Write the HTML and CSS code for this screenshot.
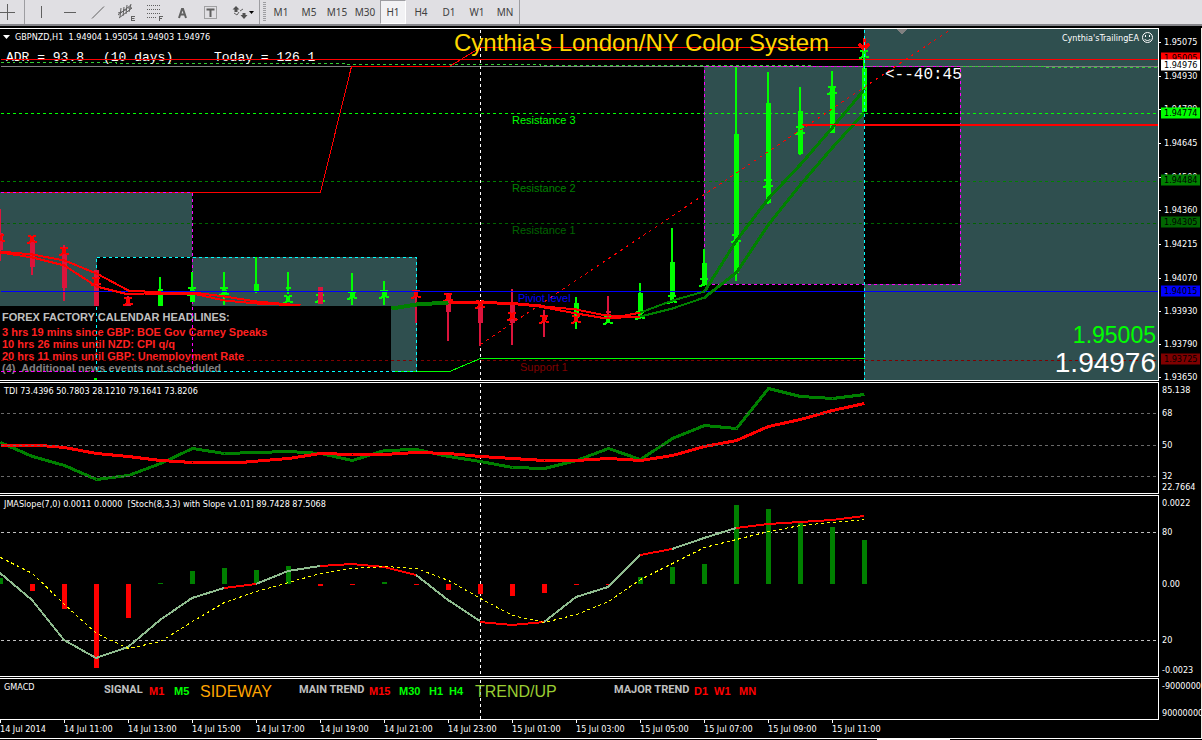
FILE: index.html
```html
<!DOCTYPE html>
<html lang="en">
<head>
<meta charset="utf-8">
<title>GBPNZD,H1</title>
<link rel="stylesheet" href="styles.css">
</head>
<body>
<div class="terminal">
  <div class="toolbar">
    <div class="tools">
      <button class="tool tool-first" aria-label="Crosshair"><svg width="16" height="24"><path d="M7.500 4V20M0 12.500H15"/></svg></button>
      <button class="tool" aria-label="Vertical line"><svg width="24" height="24"><path d="M11.500 6V18"/></svg></button>
      <button class="tool" aria-label="Horizontal line"><svg width="24" height="24"><path d="M6 12.500H18"/></svg></button>
      <button class="tool" aria-label="Trend line"><svg width="24" height="24"><path d="M6 18.500L18 6.500"/></svg></button>
      <button class="tool" aria-label="Equidistant channel"><svg width="24" height="24"><path d="M4 15L17 5M5 18L18 8M7 8L6 17M10 7L9 16M13 5L12 14M17 4L15 12M4 13L8 12M9 10L12 10M14 8L18 8M17 16.500H21M17 18.500H20.500M17 20.500H21M17.500 16V21"/></svg></button>
      <button class="tool" aria-label="Fibonacci retracement"><svg width="24" height="24"><path stroke-dasharray="1 1" d="M5 5.500H19M5 9.500H19M5 13.500H19M5 17.500H15"/><path d="M17.500 16V21M17 16.500H21M17 18.500H20"/></svg></button>
      <button class="tool" aria-label="Text"><svg width="24" height="24"><path stroke-width="2" d="M9 18L12 9H13L16 18M10 14.500H15"/></svg></button>
      <button class="tool" aria-label="Text label"><svg width="24" height="24"><path stroke-dasharray="1 1" d="M6.500 6.500H18.500V18.500H6.500Z"/><path stroke-width="2" d="M8.500 9.500H16.500M12.500 9V17"/></svg></button>
      <button class="tool tool-wide" aria-label="Arrows"><svg width="32" height="24"><path class="solid" d="M10 6L13.500 9.500H11.500V12H8.500V9.500H6.500ZM18 19L14.500 15H16.500V13H19.500V15H21.500Z"/><path d="M8 13L11 15L13 12M14 11L17 9"/><path class="black" d="M23 11H28L25.500 14Z"/></svg></button>
    </div>
    <div class="grip"></div>
    <div class="frames">
      <button class="frame">M1</button><button class="frame">M5</button><button class="frame">M15</button><button class="frame">M30</button><button class="frame active" aria-pressed="true">H1</button><button class="frame">H4</button><button class="frame">D1</button><button class="frame">W1</button><button class="frame">MN</button>
    </div>
  </div>

  <main class="charts">
    <section class="panel price">
      <div class="plot">
        <svg class="drawing" viewBox="0 29 1158 351" preserveAspectRatio="none">
          <defs>
            <path id="mark" d="M-4 -3H-2L0 -1L2 -3H4M-5 4H-3L-1 2V0H1V2L3 3H5"/>
          </defs>
          <g class="zone">
            <path d="M0 192H192V257H97V306H0ZM192 257H417V371H391V306H192ZM704 66H864V284H704ZM864 29H1158V380H864V284H960V66H864Z"/>
          </g>
          <path class="grey-fill" d="M896 29H907L901.500 34.500Z"/>
          <g transform="translate(.5 .5)">
            <path class="grey" d="M0 66H1158"/>
            <path class="lime dash" d="M0 113H1158"/>
            <path class="green dash" d="M0 181H1158"/>
            <path class="dark-green dash" d="M0 223H1158"/>
            <path class="maroon dash" d="M0 360H1158"/>
            <path class="white dash" d="M480 29V380"/>
            <path class="leaf dash" d="M0 62H116V63H345V64H540V65H811V66H1043V67H1158"/>
            <path class="red" d="M0 59H1158M0 192H320L351 66H449L480 47H864"/>
            <path class="lime" d="M391 371H449L480 358H864"/>
            <path class="magenta dash" d="M0 192H192V371H0M704 66H960V284H704Z"/>
            <path class="cyan dash" d="M96 257H416V371H96ZM864 29V380"/>
          </g>
          <path class="red w2" d="M801 125H1158"/>
          <path class="crimson w2" d="M0 209V261M32 236V275M64 245V301M128 296V305M416 290V323M448 293V341M480 302V346M512 289V345M544 310V337M608 296V323"/>
          <path class="lime w2" d="M160 277V305M192 272V302M224 272V305M256 257V293M288 272V294M352 273V305M384 281V305M576 297V329M640 283V319M672 228V303M704 249V286M736 67V281M768 72V204M800 87V155M832 71V133M864 50V68"/>
          <g transform="translate(.5 0)">
            <path class="crimson w5" d="M0 233V250M32 240V267M64 253V288M96 270V306M128 303V306M320 287V304M448 295V312M480 304V323M512 304V323M544 316V320M608 311V313"/>
            <path class="lime w5" d="M160 289V306M192 290V302M224 290V295M256 284V292M288 287V289M352 291V297M384 291V297M576 303V318M640 293V314M672 262V297M704 263V284M736 134V273M768 103V203M800 111V154M832 86V133M864 68V112"/>
          </g>
          <g class="red w2">
            <use href="#mark" x="0" y="238"/><use href="#mark" x="32" y="239"/><use href="#mark" x="64" y="251"/><use href="#mark" x="96" y="281"/><use href="#mark" x="128" y="301"/><use href="#mark" x="416" y="294"/><use href="#mark" x="448" y="297"/><use href="#mark" x="480" y="304"/><use href="#mark" x="512" y="316"/><use href="#mark" x="544" y="319"/><use href="#mark" x="576" y="319"/>
          </g>
          <g class="lime w2">
            <use href="#mark" x="192" y="291"/><use href="#mark" x="224" y="291"/><use href="#mark" x="288" y="299"/><use href="#mark" x="320" y="298"/><use href="#mark" x="352" y="295"/><use href="#mark" x="384" y="294"/><use href="#mark" x="608" y="320"/><use href="#mark" x="640" y="315"/><use href="#mark" x="672" y="299"/><use href="#mark" x="704" y="282"/><use href="#mark" x="736" y="238"/><use href="#mark" x="768" y="183"/><use href="#mark" x="800" y="130"/><use href="#mark" x="832" y="90"/><use href="#mark" x="864" y="54"/>
          </g>
          <path class="crimson w5" d="M320.500 288V304"/>
          <path class="red w3" d="M859 44L864 49L869 44M864 38V49"/>
          <g transform="translate(.5 .5)">
            <path class="blue" d="M0 291H1158"/>
            <path class="red dashdot" d="M480 344L950 29"/>
            <path class="red w2" d="M0 251L32 254L64 260L96 273L128 290L160 292H192L224 296L256 301L300 305M0 252L32 257L64 265L96 286L128 294L144 293H192L224 300L256 303L300 305"/>
            <path class="green w4" d="M391 308L416 304L448 302"/>
            <path class="red w3" d="M448 302H480L512 303L544 306"/>
            <path class="red w2" d="M544 306L576 309L600 314L620 316L640 312M544 307L576 313L600 317H620L640 316"/>
            <path class="green w2" d="M640 312L672 300L704 291M640 316L672 308L704 297"/>
            <path class="green w3" d="M704 291L736 240L768 198L800 164L832 127L864 89M704 297L736 272L768 224L800 184L832 147L864 112"/>
            <path class="cyan dash" d="M864 29V380"/>
            <path class="red" d="M801 124H864"/>
          </g>
          <path class="lime w3" d="M94 379H97"/>
        </svg>
        <div class="label caption" style="--x:3;--y:8"><svg class="caret" width="8" height="4"><path d="M0 0H7L3.500 4Z"/></svg>GBPNZD,H1&nbsp; 1.94904 1.95054 1.94903 1.94976</div>
        <div class="label mono" style="--x:6;--y:29">ADR = 93.8</div>
        <div class="label mono" style="--x:103;--y:29">(10 days)</div>
        <div class="label mono" style="--x:214;--y:29">Today = 126.1</div>
        <h1 class="label title" style="--x:454;--y:14">Cynthia's London/NY Color System</h1>
        <div class="label level lime-text" style="--x:512;--y:91">Resistance 3</div>
        <div class="label level green-text" style="--x:512;--y:159">Resistance 2</div>
        <div class="label level dark-green-text" style="--x:512;--y:201">Resistance 1</div>
        <div class="label level blue-text" style="--x:518;--y:269">Piviot level</div>
        <div class="label level maroon-text" style="--x:520;--y:338">Support 1</div>
        <div class="label countdown" style="--x:885;--y:46">&lt;--40:45</div>
        <div class="advisor">Cynthia'sTrailingEA <svg width="13" height="13"><circle cx="6.500" cy="6.500" r="5"/><path d="M4.500 4V6M8.500 4V6M3.500 8C5 10 8 10 9.500 8"/></svg></div>
        <div class="news">
          <div class="news-head">FOREX FACTORY CALENDAR HEADLINES:</div>
          <div>3 hrs 19 mins since GBP: BOE Gov Carney Speaks</div>
          <div>10 hrs 26 mins until NZD: CPI q/q</div>
          <div>20 hrs 11 mins until GBP: Unemployment Rate</div>
          <div class="news-more">(4)&nbsp; Additional news events not scheduled</div>
        </div>
        <svg class="drawing" viewBox="0 29 1158 351" preserveAspectRatio="none">
          <g transform="translate(.5 .5)">
            <path class="red" d="M0 59H330"/>
            <path class="maroon dash" d="M0 360H391"/>
            <path class="cyan dash" d="M96 306V371H391"/>
            <path class="magenta dash" d="M192 306V371M0 371H96"/>
          </g>
        </svg>
        <div class="quotes">
          <div class="ask">1.95005</div>
          <div class="bid">1.94976</div>
        </div>
      </div>
      <div class="axis">
        <span class="tick" style="--y:14">1.95075</span>
        <span class="tick" style="--y:48">1.94930</span>
        <span class="tick" style="--y:81">1.94789</span>
        <span class="tick" style="--y:115">1.94645</span>
        <span class="tick" style="--y:149">1.94500</span>
        <span class="tick" style="--y:182">1.94360</span>
        <span class="tick" style="--y:216">1.94215</span>
        <span class="tick" style="--y:250">1.94070</span>
        <span class="tick" style="--y:283">1.93930</span>
        <span class="tick" style="--y:316">1.93790</span>
        <span class="tick" style="--y:349">1.93650</span>
        <span class="tag tag-red" style="--y:30">1.95005</span>
        <span class="tag tag-white" style="--y:37">1.94976</span>
        <span class="tag tag-lime" style="--y:85">1.94774</span>
        <span class="tag tag-green" style="--y:152">1.94484</span>
        <span class="tag tag-dark" style="--y:194">1.94305</span>
        <span class="tag tag-blue" style="--y:263">1.94015</span>
        <span class="tag tag-maroon" style="--y:331">1.93725</span>
      </div>
    </section>

    <section class="panel tdi">
      <div class="plot">
        <svg class="drawing" viewBox="0 383 1158 110" preserveAspectRatio="none">
          <g transform="translate(.5 .5)">
            <path class="white dash" d="M480 383V493"/>
            <path class="green w3" d="M0 442L32 456L64 465L96 479L128 475L160 463L192 448L224 453L256 452L288 451L320 453L352 460L384 450L416 449L448 456L480 461L512 467L544 468L576 460L608 448L640 459L672 438L704 425L736 428L768 388L800 396L832 398L864 394"/>
            <path class="red w3" d="M0 445H40L64 447L96 453L128 456L160 460L192 462H240L288 458L320 453L352 454H384L416 452L448 453L480 456L544 460H576L608 458L640 460L672 455L704 446L736 440L768 426L800 419L832 410L864 403"/>
            <path class="dim dash" d="M0 413H1158M0 445H1158M0 476H1158"/>
          </g>
        </svg>
        <div class="label caption" style="--x:4;--y:8">TDI 73.4396 50.7803 28.1210 79.1641 73.8206</div>
      </div>
      <div class="axis">
        <span class="mark" style="--y:8">85.138</span>
        <span class="mark" style="--y:31">68</span>
        <span class="mark" style="--y:63">50</span>
        <span class="mark" style="--y:94">32</span>
        <span class="mark" style="--y:105">22.7664</span>
      </div>
    </section>

    <section class="panel slope">
      <div class="plot">
        <svg class="drawing" viewBox="0 496 1158 180" preserveAspectRatio="none">
          <g transform="translate(.5 .5)">
            <path class="white dash" d="M480 496V676"/>
            <path class="silver dash" d="M0 532H1158M0 640H1158"/>
          </g>
          <g transform="translate(.5 0)">
            <path class="green w5" d="M0 578V584M160 583V584M192 571V584M224 568V584M256 570V584M288 566V584M384 582V584M640 577V584M672 567V584M704 564V584M736 505V584M768 509V584M800 522V584M832 527V584M864 540V584"/>
            <path class="red w5" d="M32 584V591M64 584V609M96 584V668M128 584V618M320 584V586M352 584V585M416 584V585M448 584V590M480 584V594M512 584V596M544 584V593M576 584V585M608 584V585"/>
          </g>
          <path class="sage w2" d="M0 573L32 600L64 640L96 658L128 647L160 620L192 598L224 588M256 584L288 571L320 566M416 575L448 600L480 621M544 622L576 597L608 587L640 555M672 549L704 538L736 528"/>
          <path class="red w2" d="M224 588L256 584M320 566L352 564L384 567L416 575M480 622L512 625L544 622M640 555L672 549M736 528L768 524L800 522L832 520L864 516"/>
          <path class="yellow fine" transform="translate(.5 .5)" d="M0 557L32 573L64 604L96 633L128 648L160 641L192 621L224 602L256 591L288 582L320 573L352 568L384 566L416 568L448 580L480 598L512 615L544 622L576 614L608 601L640 579L672 563L704 547L736 539L768 531L800 525L832 522L864 519"/>
        </svg>
        <div class="label caption" style="--x:4;--y:8">JMASlope(7,0) 0.0011 0.0000&nbsp; [Stoch(8,3,3) with Slope v1.01] 89.7428 87.5068</div>
      </div>
      <div class="axis">
        <span class="mark" style="--y:8">0.0022</span>
        <span class="mark" style="--y:37">80</span>
        <span class="mark" style="--y:89">0.00</span>
        <span class="mark" style="--y:145">20</span>
        <span class="mark" style="--y:175">-0.0023</span>
      </div>
    </section>

    <section class="panel gmacd">
      <div class="plot">
        <svg class="drawing" viewBox="0 679 1158 40" preserveAspectRatio="none">
          <path class="white dash" transform="translate(.5 .5)" d="M480 679V719"/>
        </svg>
        <div class="label caption" style="--x:4;--y:8">GMACD</div>
        <div class="label signal silver-text" style="--x:104;--y:11">SIGNAL</div>
        <div class="label signal red-text" style="--x:149;--y:12">M1</div>
        <div class="label signal lime-text" style="--x:174;--y:12">M5</div>
        <div class="label verdict orange-text" style="--x:200;--y:13">SIDEWAY</div>
        <div class="label signal silver-text" style="--x:299;--y:11">MAIN TREND</div>
        <div class="label signal red-text" style="--x:369;--y:12">M15</div>
        <div class="label signal lime-text" style="--x:399;--y:12">M30</div>
        <div class="label signal lime-text" style="--x:429;--y:12">H1</div>
        <div class="label signal lime-text" style="--x:449;--y:12">H4</div>
        <div class="label verdict olive-text" style="--x:475;--y:13">TREND/UP</div>
        <div class="label signal silver-text" style="--x:614;--y:11">MAJOR TREND</div>
        <div class="label signal red-text" style="--x:694;--y:12">D1</div>
        <div class="label signal red-text" style="--x:714;--y:12">W1</div>
        <div class="label signal red-text" style="--x:739;--y:12">MN</div>
      </div>
      <div class="axis">
        <span class="mark" style="--y:8">-90000000</span>
        <span class="mark" style="--y:35">90000000</span>
      </div>
    </section>
  </main>

  <div class="times">
    <span>14 Jul 2014</span><span>14 Jul 11:00</span><span>14 Jul 13:00</span><span>14 Jul 15:00</span><span>14 Jul 17:00</span><span>14 Jul 19:00</span><span>14 Jul 21:00</span><span>14 Jul 23:00</span><span>15 Jul 01:00</span><span>15 Jul 03:00</span><span>15 Jul 05:00</span><span>15 Jul 07:00</span><span>15 Jul 09:00</span><span>15 Jul 11:00</span>
  </div>
  <div class="foot"></div>
</div>
</body>
</html>
```
FILE: styles.css
```css
* { box-sizing: border-box; }

body {
  margin: 0;
  background: #000;
  color: #fff;
  font: 9px/12px "DejaVu Sans Condensed", "DejaVu Sans", sans-serif;
}

.terminal {
  display: flex;
  flex-direction: column;
  height: 100vh;
  overflow: hidden;
}

/* Toolbar */
.toolbar {
  display: flex;
  flex: none;
  height: 26px;
  background: #e0dfe3;
  border-bottom: 2px solid #85858a;
}
.tools { display: flex; border-right: 1px solid #9d9da1; }
.tool, .frame {
  display: flex;
  align-items: center;
  justify-content: center;
  width: 28px;
  height: 24px;
  padding: 0;
  border: 0;
  background: none;
  color: #404040;
}
.tool-first {
  width: 25px;
  justify-content: flex-start;
  border-right: 1px solid #9d9da1;
  margin-right: 3px;
}
.tool-wide { width: 35px; }
.tool svg { fill: none; stroke: #606060; }
.tool .solid { fill: #505050; stroke: none; }
.tool .black { fill: #000; stroke: none; }
.grip {
  width: 3px;
  margin: 2px 1px 2px 3px;
  background: repeating-linear-gradient(#9d9da1 0 1px, #e0dfe3 1px 2px);
}
.frames { display: flex; border-right: 1px solid #9d9da1; }
.frame { font: 10px/14px "Noto Sans", sans-serif; }
.frame.active {
  width: 26px;
  margin: 0 1px;
  background: #f2f2f4;
  border: 1px solid #fff;
  border-top-color: #9d9da1;
  border-left-color: #9d9da1;
}

/* Panels */
.charts {
  display: flex;
  flex: 1;
  flex-direction: column;
  gap: 1px;
  min-height: 0;
  margin-top: 2px;
  border-right: 1px solid #f0f0e8;
}
.panel { display: flex; min-height: 0; }
.price { flex: 353 1 0; }
.tdi { flex: 112 1 0; }
.slope { flex: 182 1 0; }
.gmacd { flex: 42 1 0; }
.plot {
  position: relative;
  flex: 1;
  border: solid #fff;
  border-width: 1px 1px 1px 0;
  overflow: hidden;
}
.axis {
  position: relative;
  flex: none;
  width: 42px;
  overflow: hidden;
}
.drawing {
  position: absolute;
  inset: 0;
  width: 100%;
  height: 100%;
  fill: none;
  shape-rendering: crispEdges;
}

/* Strokes */
.w2 { stroke-width: 2; }
.w3 { stroke-width: 3; }
.w4 { stroke-width: 4; }
.w5 { stroke-width: 5; }
.dash { stroke-dasharray: 3 3; }
.fine { stroke-dasharray: 3 3; }
.dashdot { stroke-dasharray: 3 4; }
.zone { fill: #2f4f4f; }
.grey-fill { fill: #808080; }
.grey { stroke: #808080; }
.dim { stroke: #696969; }
.silver { stroke: #c0c0c0; }
.white { stroke: #fff; }
.red { stroke: #f00; }
.crimson { stroke: #dc143c; }
.lime { stroke: #0f0; }
.leaf { stroke: #32cd32; }
.green { stroke: #008000; }
.dark-green { stroke: #006400; }
.maroon { stroke: #800000; }
.magenta { stroke: #f0f; }
.cyan { stroke: #0ff; }
.blue { stroke: #00f; }
.sage { stroke: #8fbc8f; }
.yellow { stroke: #ff0; }

/* Text over the plots: --x and --y give the left edge and the vertical centre */
.label {
  position: absolute;
  left: calc(var(--x) / 1158 * 100%);
  top: calc(var(--y) * 1px);
  margin: 0;
  transform: translateY(-50%);
  white-space: pre;
}
.caption { display: flex; align-items: center; }
.caret { margin-right: 4px; fill: #fff; }
.mono { font: 13px/16px "Liberation Mono", monospace; }
.title { color: #ffd700; font: 24px/28px "Liberation Sans", sans-serif; }
.level { font: 11px/14px "Liberation Sans", sans-serif; }
.countdown { font: 16px/18px "Liberation Mono", monospace; }
.signal { font: bold 11px/14px "Liberation Sans", sans-serif; }
.signal.silver-text { font-family: Roboto, sans-serif; }
.verdict { font: 16px/18px "Liberation Sans", sans-serif; }

.lime-text { color: #0f0; }
.green-text { color: #008000; }
.dark-green-text { color: #006400; }
.blue-text { color: #00f; }
.maroon-text { color: #800000; }
.silver-text { color: #c0c0c0; }
.red-text { color: #f00; }
.orange-text { color: #ffa500; }
.olive-text { color: #9acd32; }

.advisor {
  position: absolute;
  top: 2px;
  right: 4px;
  display: flex;
  align-items: center;
  gap: 2px;
}
.advisor svg { fill: none; stroke: #fff; }

.news {
  position: absolute;
  left: 0;
  bottom: 5px;
  width: 391px;
  height: 69px;
  padding: 5px 2px 0;
  background: #000;
  color: #ff2020;
  font: bold 11px/12px "Liberation Sans", sans-serif;
}
.news-head { margin-bottom: 3px; color: #c0c0c0; }
.news-more { color: #808080; }

.quotes {
  position: absolute;
  right: 2px;
  bottom: 2px;
  text-align: right;
  font-family: "Liberation Sans", sans-serif;
}
.ask { color: #0f0; font-size: 23px; line-height: 26px; }
.bid { font-size: 28px; line-height: 30px; }

/* Scales */
.tick, .mark, .tag {
  position: absolute;
  top: calc(var(--y) / var(--span, 353) * 100%);
  left: 0;
  padding-left: 3px;
  transform: translateY(-50%);
  white-space: nowrap;
}
.tdi .axis { --span: 112; }
.slope .axis { --span: 182; }
.gmacd .axis { --span: 42; }
.tick { display: flex; align-items: center; gap: 3px; padding-left: 0; }
.tick::before { content: ""; width: 2px; height: 1px; background: #fff; }
.tag {
  left: 2px;
  width: 39px;
  padding-left: 3px;
  line-height: 11px;
  color: #000;
}
.tag-red { background: #f00; }
.tag-white { background: #fff; }
.tag-lime { background: #0f0; }
.tag-green { background: #008000; }
.tag-dark { background: #006400; }
.tag-blue { background: #00f; }
.tag-maroon { background: #800000; }

.times {
  display: flex;
  flex: none;
  height: 18px;
  border-right: 1px solid #f0f0e8;
}
.times span {
  position: relative;
  flex: none;
  width: calc(64 / 1201 * 100%);
  padding-top: 3px;
  white-space: nowrap;
}
.times span::before {
  content: "";
  position: absolute;
  top: 0;
  left: 0;
  width: 1px;
  height: 3px;
  background: #fff;
}
.foot {
  flex: none;
  height: 2px;
  border-top: 1px solid #fff;
  background: linear-gradient(90deg, #000 73%, #fff 73% 79%, #000 79%);
}
```
